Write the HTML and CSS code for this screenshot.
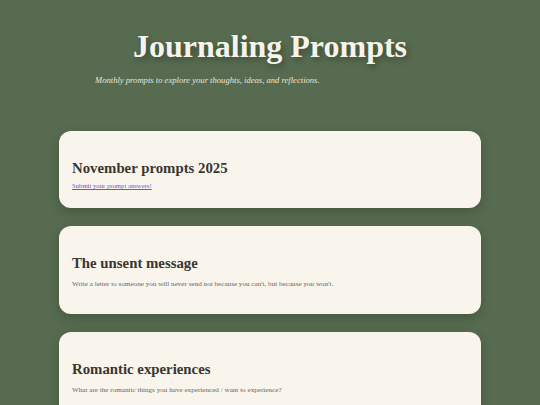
FILE: index.html
```html
<!DOCTYPE html>
<html>
<head>
<meta charset="utf-8">
<link rel="stylesheet" href="styles.css">
</head>
<body>
<header class="header">
  <h1 class="title">Journaling Prompts</h1>
  <p class="subtitle">Monthly prompts to explore your thoughts, ideas, and reflections.</p>
</header>
<main class="list">
  <section class="card">
    <h2 class="card-title">November prompts 2025</h2>
    <a class="card-link" href="#">Submit your prompt answers!</a>
  </section>
  <section class="card">
    <h2 class="card-title">The unsent message</h2>
    <p class="card-text">Write a letter to someone you will never send not because you can't, but because you won't.</p>
  </section>
  <section class="card">
    <h2 class="card-title">Romantic experiences</h2>
    <p class="card-text">What are the romantic things you have experienced / want to experience?</p>
  </section>
</main>
</body>
</html>
```
FILE: styles.css
```css
html, body {
  margin: 0;
  padding: 0;
}
body {
  background: #566b4f;
  font-family: "Liberation Serif", "DejaVu Serif", serif;
  width: 540px;
  height: 405px;
  overflow: hidden;
}
.header {
  width: 350px;
  margin: 0 auto;
  padding-top: 26px;
}
.title {
  margin: 0;
  text-align: center;
  font-size: 32px;
  line-height: 40px;
  font-weight: bold;
  color: #f6f3ea;
  text-shadow: 2px 3px 6px rgba(0, 0, 0, 0.3);
}
.subtitle {
  margin: 9px 0 0;
  font-style: italic;
  font-size: 8.6px;
  color: #e8e6dc;
}
.list {
  margin: 46px 59px 0;
  display: flex;
  flex-direction: column;
  gap: 18px;
}
.card {
  background: #f9f5ed;
  border-radius: 12px;
  padding: 27px 13px 17px;
  box-shadow: 0 4px 12px rgba(0, 0, 0, 0.18);
}
.card-title {
  margin: 0 0 3px;
  font-size: 14.8px;
  line-height: 20px;
  font-weight: bold;
  color: #3a3530;
}
.card-link {
  display: block;
  font-size: 6.7px;
  line-height: 10px;
  color: #6657d8;
  text-decoration: underline;
}
.card-text {
  margin: 6px 0 8px;
  font-size: 7.15px;
  line-height: 10px;
  color: #6a6460;
}
```
